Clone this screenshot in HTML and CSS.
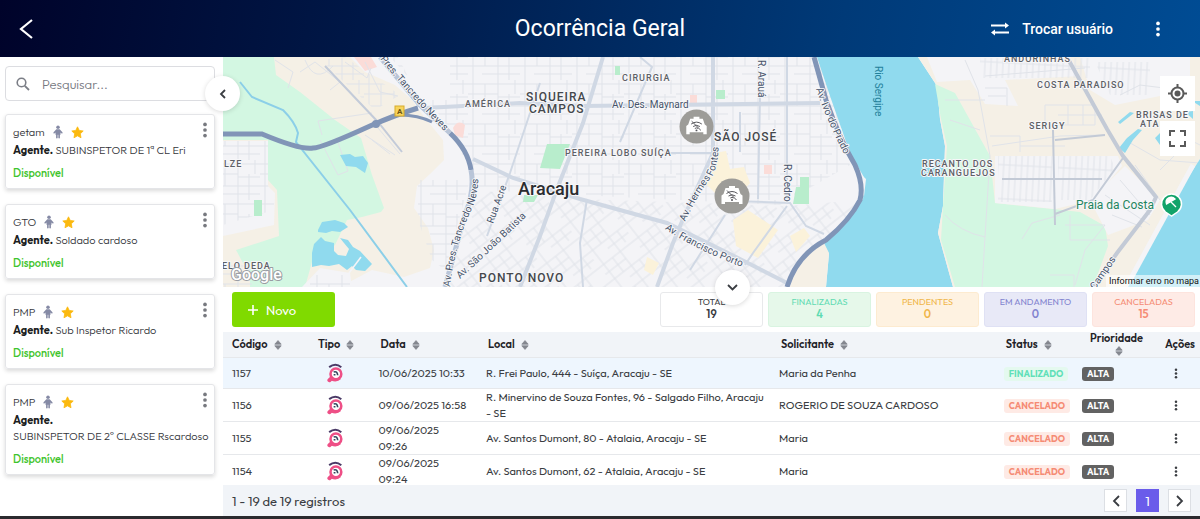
FILE: index.html
```html
<!DOCTYPE html>
<html lang="pt-BR">
<head>
  <meta charset="UTF-8" />
  <meta name="viewport" content="width=device-width, initial-scale=1.0"/>
  <title>Ocorrência Geral</title>
  <link rel="stylesheet" href="styles.css">
</head>
<body>
  <!-- Ícones -->
  <svg class="sprite" aria-hidden="true">
    <symbol id="i-person" viewBox="0 0 12 16">
      <circle cx="6" cy="2.200" r="2.100"/>
      <path d="M4 4.800h4l3.300 3.400c.7 1-.5 2-1.300 1.300L9 8.600v2.800H8.300v3.400c0 1.300-1.900 1.300-1.900 0v-3.400h-.8v3.400c0 1.300-1.900 1.300-1.900 0v-3.400H3V8.600l-1 .9C1.200 10.200 0 9.200.7 8.200z"/>
    </symbol>
    <symbol id="i-star" viewBox="0 0 24 24">
      <path d="M12 1.500l3.200 6.700 7.300 1-5.300 5.200 1.300 7.300L12 18.200l-6.500 3.500 1.300-7.300L1.500 9.200l7.300-1z" stroke="currentColor" stroke-width="1.500" stroke-linejoin="round"/>
    </symbol>
    <symbol id="i-dots" viewBox="0 0 6 20">
      <circle cx="3" cy="3" r="2.300"/><circle cx="3" cy="10" r="2.300"/><circle cx="3" cy="17" r="2.300"/>
    </symbol>
    <symbol id="i-sort" viewBox="0 0 10 12">
      <path d="M5 0.500L9 5H1zM5 11.500L1 7h8z" stroke="currentColor" stroke-linejoin="round"/>
    </symbol>
    <symbol id="i-type" viewBox="0 0 20 22">
      <path d="M3.500 4.500Q10.500-1 17 4.500" fill="none" stroke="#4a3a66" stroke-width="2.200"/>
      <circle cx="11" cy="12" r="6" fill="#fff" stroke="#ee4f86" stroke-width="2.800"/>
      <path d="M8.500 10q4-1.500 4.500 3.500M8.500 13h2" fill="none" stroke="#33475e" stroke-width="1.800"/>
      <path d="M5.500 17.500L3.800 19" fill="none" stroke="#ee4f86" stroke-width="4.500" stroke-linecap="round"/>
      <path d="M6 18.500q6 2.500 10-1.500" fill="none" stroke="#ee4f86" stroke-width="2"/>
    </symbol>
    <symbol id="i-car" viewBox="0 0 36 36">
      <circle cx="18" cy="18" r="17.500" fill="#9d9c98"/>
      <path d="M15 8h6v2h3.500l2 6 2 1.500V26h-3.500v-2H11v2H7.500v-8.500l2-1.500 2-6H15z" fill="#fff"/>
      <path d="M12.500 15.500q5.500-4 11 0M14.500 18q3.500-2.500 7 0M16.300 20q1.700-1.200 3.400 0M13 12.500l9.500 9.500" fill="none" stroke="#55555a" stroke-width="1"/>
      <circle cx="18" cy="22" r="1" fill="#55555a"/>
    </symbol>
  </svg>

  <header class="topbar">
    <button class="icon-btn back" aria-label="Voltar">
      <svg width="16" height="22" viewBox="0 0 16 22"><path d="M14 2L3 11l11 9" fill="none" stroke="currentColor" stroke-width="2.200"/></svg>
    </button>
    <h1>Ocorrência Geral</h1>
    <div class="topbar-right">
      <button class="switch-user">
        <svg width="18" height="14" viewBox="0 0 18 14"><path d="M0 3.500h14M4 10.500h14" stroke="currentColor" stroke-width="1.800"/><path d="M14 0.500L18 3.500 14 6.500zM4 7.500L0 10.500 4 13.500z" fill="currentColor"/></svg>
        Trocar usuário
      </button>
      <button class="icon-btn" aria-label="Mais opções">
        <svg width="6" height="16"><use href="#i-dots"/></svg>
      </button>
    </div>
  </header>

  <div class="layout">
    <aside class="sidebar">
      <label class="search">
        <svg width="14" height="14" viewBox="0 0 14 14"><circle cx="5.500" cy="5.500" r="4.300" fill="none" stroke="currentColor" stroke-width="1.600"/><path d="M8.800 8.800L13 13" stroke="currentColor" stroke-width="1.800"/></svg>
        <input type="text" placeholder="Pesquisar..." aria-label="Pesquisar">
      </label>

      <article class="agent">
        <div class="agent-head">
          <span>getam</span>
          <svg class="person"><use href="#i-person"/></svg>
          <svg class="star"><use href="#i-star"/></svg>
          <button class="icon-btn menu" aria-label="Opções"><svg width="6" height="16"><use href="#i-dots"/></svg></button>
        </div>
        <p><b>Agente.</b> SUBINSPETOR DE 1ª CL Eri</p>
        <p class="available">Disponível</p>
      </article>

      <article class="agent">
        <div class="agent-head">
          <span>GTO</span>
          <svg class="person"><use href="#i-person"/></svg>
          <svg class="star"><use href="#i-star"/></svg>
          <button class="icon-btn menu" aria-label="Opções"><svg width="6" height="16"><use href="#i-dots"/></svg></button>
        </div>
        <p><b>Agente.</b> Soldado cardoso</p>
        <p class="available">Disponível</p>
      </article>

      <article class="agent">
        <div class="agent-head">
          <span>PMP</span>
          <svg class="person"><use href="#i-person"/></svg>
          <svg class="star"><use href="#i-star"/></svg>
          <button class="icon-btn menu" aria-label="Opções"><svg width="6" height="16"><use href="#i-dots"/></svg></button>
        </div>
        <p><b>Agente.</b> Sub Inspetor Ricardo</p>
        <p class="available">Disponível</p>
      </article>

      <article class="agent">
        <div class="agent-head">
          <span>PMP</span>
          <svg class="person"><use href="#i-person"/></svg>
          <svg class="star"><use href="#i-star"/></svg>
          <button class="icon-btn menu" aria-label="Opções"><svg width="6" height="16"><use href="#i-dots"/></svg></button>
        </div>
        <p><b>Agente.</b><br>SUBINSPETOR DE 2º CLASSE Rscardoso</p>
        <p class="available">Disponível</p>
      </article>

      <button class="round-btn collapse-side" aria-label="Recolher lista">
        <svg width="7" height="10" viewBox="0 0 7 10"><path d="M6 1L2 5l4 4" fill="none" stroke="currentColor" stroke-width="1.800"/></svg>
      </button>
    </aside>

    <main class="content">
      <section class="map" aria-label="Mapa">
        <svg class="map-canvas" viewBox="223 57 977 230" preserveAspectRatio="xMidYMid slice">
          <defs>
            <pattern id="grid" width="52" height="40" patternUnits="userSpaceOnUse">
              <path d="M0 4h52M0 14h30M30 17h22M0 26h52M14 34h38M5 0v40M17 4v22M30 0v40M41 14v26M47 0v14" class="street"/>
            </pattern>
            <pattern id="grid-tilt" width="44" height="36" patternUnits="userSpaceOnUse" patternTransform="rotate(-38)">
              <path d="M0 4h44M0 13h26M0 22h44M18 30h26M5 0v36M16 4v18M26 0v36M36 22v14" class="street"/>
            </pattern>
            <pattern id="grid-east" width="12" height="34" patternUnits="userSpaceOnUse" patternTransform="rotate(3)">
              <path d="M3 0v34M9 0v34M0 10h12" class="street"/>
            </pattern>
            <path id="p-tancredo-n" d="M380 59Q412 99 456 143"/>
            <path id="p-tancredo-s" d="M450 287Q456 240 472 209 480 190 478 165"/>
            <path id="p-joao" d="M460 279Q495 247 532 211"/>
            <path id="p-acre" d="M493 224L510 177"/>
            <path id="p-hermes" d="M685 222Q700 190 711 178 718 168 719 142"/>
            <path id="p-porto" d="M665 229Q695 250 755 272"/>
            <path id="p-ivo" d="M816 89Q830 130 852 168"/>
            <path id="p-campos" d="M1095 290L1121 252"/>
          </defs>

          <!-- Terreno -->
          <rect x="223" y="57" width="977" height="230" fill="#f4f4f7"/>
          <path fill="url(#grid)" d="M470 57H822L850 165 780 205 480 190 450 130 425 95 390 57z"/>
          <path fill="url(#grid-tilt)" d="M470 190L580 199 787 206 860 200 787 287H446z"/>
          <path fill="#f5f0e6" d="M273 57H350L365 72 395 85 412 100 425 118 443 140 444 160 430 174 417 186 414 208 428 228 434 250 430 268 404 277 372 270 340 287H223V192L272 190 278 235 235 250 223 255V57z"/>
          <path fill="#d3f7e2" d="M223 57H274L276 75 300 92 335 120 361 138 372 175 384 208 381 212 362 217 347 220 335 245 312 262 305 287H250L250 276 236 250 279 236 277 190 268 180V140H223z"/>
          <path fill="#f4f4f7" d="M223 141H268V186L275 193 274 225 223 236z"/>
          <path fill="url(#grid)" d="M223 141H268V186L274 193 274 210 223 225zM223 262H252V287H223z"/>
          <path fill="#f4f4f7" d="M302 287L320 268 350 273 352 287zM398 57H450V100L420 100z"/>
          <path fill="url(#grid)" d="M310 275H350V287H310zM418 180H470L445 270 432 260 418 220zM320 60L345 57 400 95 375 110z"/>
          <path fill="#fbdcd8" d="M354 57h17l6 10-12 4zM453 128q5-9 12-3l-2 13-8-3zM690 95h7v8h-7zM764 165h8v9h-8z"/>
          <path fill="#b8edcc" d="M254 200h8v16h-8zM547 144h23l-10 25-20-1zM800 177h9v27h-16l3-17h4zM524 195h14l-4 7h-11zM615 66h5v9h-5zM716 90h9v9h-9z"/>
          <path fill="#fbf2da" d="M714 153l12-2 4 18 14-2 6 16-14 16-20-5-10-10zM733 220l15-10 30 20-20 28-22-12zM790 236l14-8 6 8-14 16zM647 257l12 6-6 12-9-5z"/>
          <path d="M275 60L293 72 288 88M300 72l15-10 25 20-10 8M305 60q10 25 28 6M345 62l22 16 4-10M365 62l15 30 18 4M322 135L318 121 372 113M320 140l18 35 10-4-12-34M365 135L395 155M378 128l22 26M372 140l18 14" class="street"/>

          <!-- Água -->
          <g fill="#90daee">
            <path d="M817 57L830 96 850 153 865 179 863 199 840 229 824 244 829 254 826 287H953L938 233 943 206 945 146 940 119 937 86 918 57z"/>
            <path d="M340 155l10-1 5 3 8-1 5 7-3 10-9-6-10-1zM318 230l4-8 13-2 9 3 4 4-8 5-8-1-6 2-8-1zM312 253l2-9 7-7 4 4 9 2v8l4 4 8 1 3-7-5-6-4-5 8 2 5 7 7 4 12 13-7 7-9-1-4-4-5 4-8-6-10 2-8-1-9 2z"/>
          </g>
          <path d="M240 82L252 97 283 110Q295 122 298 133L296 142 350 210 407 287" fill="none" stroke="#8ccfe8" stroke-width="2"/>
          <path d="M349 273l12-16" stroke="#f4f4f7" stroke-width="1.500"/>
          <path fill="#f5f0e6" d="M824 243L829 253 826 287H790Q796 262 824 243z"/>
          <path fill="#f4f4f7" d="M856 170l10 9-2 17-6-6z"/>

          <!-- Margem leste -->
          <path fill="#f5f0e6" d="M918 57H1200V159L1170 206 1147 249 1127 287H953L938 233 943 206 945 146 940 119 937 86z"/>
          <path fill="#d3f7e2" d="M935 84L955 93 990 156 995 203 1053 209 1080 212 1105 226 1108 246 1093 287H955L941 240 943 206 947 146 941 119z"/>
          <path fill="#f4f4f7" d="M927 57H1070L1080 76 1005 80 1018 106 985 104 970 80 937 82zM995 156H1118L1122 166 1093 200 1055 209 995 203zM1080 57H1190V90L1115 105 1090 90zM1090 200L1125 166 1160 200 1148 220 1108 235z"/>
          <path fill="url(#grid-east)" d="M998 156H1052V202H998zM1058 156H1110L1115 168 1090 200 1058 200zM980 58H1090V78H980zM1095 62H1150V95H1110z"/>
          <path d="M985 76L1085 68M965 60L978 90 990 156M985 88h22v18M988 96h18M990 136h30v16M992 146L1060 136 1105 135M1045 105h50v20h-50zM1058 115h44M1068 105v20M1083 105v20M1020 146h45M945 100h40M950 120l30 10M945 215Q960 232 985 237L990 156M985 237L982 287M1060 215l-28 8-10 16M1065 225h40l-20 25M1070 215v25h40M1120 180l30 35M1135 165l25 35M1105 195l45 30M1112 215l30 12M1050 275h24v12M1075 285l10-35M1160 170l30-30 10 5M1125 140l35 20 40 3M1120 95l20-10 40 5" class="street"/>
          <path fill="#90daee" d="M1200 159L1170 206 1147 249 1128 287H1200zM1118 122l12-10 4 1-14 11zM1119 148l8-10 11-9 4 1-9 10-8 13zM1155 138l5-5v12zM1185 112l8-1v8zM1192 101h8v5z"/>
          <path d="M1193 165L1130 280" stroke="#f4f4f7" stroke-width="5"/>
          <g fill="none" stroke="#c3cad6">
            <path d="M1067 57L1107 129 1123 156 1156 197 1150 210 1117 253 1093 287" stroke-width="4"/>
            <path d="M1053 130L1055 225M1002 179h100M1123 158L1093 200 1055 214M1055 140L1105 135" stroke-width="2"/>
          </g>

          <!-- Avenidas -->
          <g fill="none" stroke="#d0d8e4" stroke-width="4">
            <path d="M425 108L520 103 583 106 820 103M603 57L583 123 557 189 540 236 520 287M713 57V153L683 219 673 243 657 287M473 159L513 178 580 199 667 223 740 259 787 283"/>
            <path d="M787 57V200M760 96L758 199M733 201L790 203 806 226 824 234M667 153h46M587 199L580 243 583 287M787 206L753 253 745 265M540 83L510 173 487 236M725 215L690 270M740 152v-40M640 57l12 10-32 75" stroke-width="2"/>
            <path d="M325 66L378 122 402 152" stroke="#c3cbd9" stroke-width="2"/>
          </g>
          <g fill="none" stroke="#8195b7" stroke-width="5">
            <path d="M223 134H262Q300 150 313 148 322 148 370 126 395 115 418 108"/>
            <path d="M400 115Q418 115 432 122" stroke-width="3"/>
            <path d="M450 133Q468 150 471 170"/>
            <path d="M380 57L420 105 450 133M471 170Q475 190 465 215L445 287" stroke="#b9c5d8"/>
            <path d="M814 57L826 100Q840 140 855 165 864 185 860 200 850 220 826 240 797 255 787 287"/>
          </g>
          <circle cx="376" cy="124" r="4" fill="#8195b7"/>
          <rect x="395" y="106" width="9" height="10" fill="#f7d45c" stroke="#d8ab2a"/>
          <text x="397" y="114" class="badge-a">A</text>

          <!-- Nomes -->
          <g class="area">
            <text x="622" y="81">CIRURGIA</text>
            <text x="465" y="107">AMÉRICA</text>
            <text x="565" y="156">PEREIRA LOBO SUÍÇA</text>
            <text x="224" y="167">LZE</text>
            <text x="222" y="269">ELO DEDA</text>
            <text x="1004" y="62">ANDORINHAS</text>
            <text x="1037" y="88">COSTA PARADISO</text>
            <text x="1029" y="129">SERIGY</text>
            <text x="1136" y="118">BRISAS DE</text>
            <text x="1140" y="127">ATA</text>
            <text x="922" y="167">RECANTO DOS</text>
            <text x="921" y="176">CARANGUEJOS</text>
          </g>
          <g class="district">
            <text x="526" y="101">SIQUEIRA</text>
            <text x="529" y="113">CAMPOS</text>
            <text x="714" y="141">SÃO JOSÉ</text>
            <text x="479" y="282">PONTO NOVO</text>
          </g>
          <text x="518" y="195" class="city">Aracaju</text>
          <g class="road">
            <text x="612" y="108">Av. Des. Maynard</text>
            <text><textPath href="#p-tancredo-n">Pres. Tancredo Neves</textPath></text>
            <text><textPath href="#p-tancredo-s">Av. Pres. Tancredo Neves</textPath></text>
            <text><textPath href="#p-joao">Av. São João Batista</textPath></text>
            <text><textPath href="#p-acre">Rua Acre</textPath></text>
            <text><textPath href="#p-hermes">Av. Hermes Fontes</textPath></text>
            <text><textPath href="#p-porto">Av. Francisco Porto</textPath></text>
            <text><textPath href="#p-ivo">Av. Ivo do Prado</textPath></text>
            <text><textPath href="#p-campos">Campos</textPath></text>
            <text transform="translate(758 60) rotate(90)">R. Arauá</text>
            <text transform="translate(784 164) rotate(90)">R. Cedro</text>
          </g>
          <text transform="translate(875 66) rotate(90)" class="river">Rio Sergipe</text>
          <text x="1076" y="209" class="beach">Praia da Costa</text>
          <path d="M1171.500 216l-6-4a10 10 0 1 1 12 0z" fill="#11a36a" stroke="#fff" stroke-width="1.500"/>
          <path d="M1166.500 204a5 5 0 0 1 8.500-5zM1171 202l5 5" fill="#fff" stroke="#fff" stroke-width="1.300"/>
          <text x="231" y="280" class="logo">Google</text>

          <!-- Viaturas -->
          <use href="#i-car" x="679" y="109" width="35" height="35"/>
          <use href="#i-car" x="714" y="178" width="36" height="36"/>
        </svg>

        <div class="map-tools">
          <button aria-label="Minha localização">
            <svg width="19" height="19" viewBox="0 0 19 19"><path d="M9.500 0v4M9.500 15v4M0 9.500h4M15 9.500h4" stroke="currentColor" stroke-width="2"/><circle cx="9.500" cy="9.500" r="6" fill="none" stroke="currentColor" stroke-width="2"/><circle cx="9.500" cy="9.500" r="3" fill="currentColor"/></svg>
          </button>
          <button aria-label="Tela cheia">
            <svg width="17" height="17" viewBox="0 0 17 17"><path d="M1 6V1h5M11 1h5v5M16 11v5h-5M6 16H1v-5" fill="none" stroke="currentColor" stroke-width="2"/></svg>
          </button>
        </div>
        <a href="#" class="map-report">Informar erro no mapa</a>
        <button class="round-btn collapse-map" aria-label="Recolher mapa">
          <svg width="11" height="7" viewBox="0 0 11 7"><path d="M1 1l4.500 4.500L10 1" fill="none" stroke="currentColor" stroke-width="1.800"/></svg>
        </button>
      </section>

      <section class="toolbar">
        <button class="btn-new">
          <svg width="10" height="10" viewBox="0 0 10 10"><path d="M5 0v10M0 5h10" stroke="currentColor" stroke-width="1.600"/></svg>
          Novo
        </button>
        <div class="totals">
          <div class="total">TOTAL<b>19</b></div>
          <div class="total total-done">FINALIZADAS<b>4</b></div>
          <div class="total total-pending">PENDENTES<b>0</b></div>
          <div class="total total-progress">EM ANDAMENTO<b>0</b></div>
          <div class="total total-canceled">CANCELADAS<b>15</b></div>
        </div>
      </section>

      <section class="table-wrap">
        <table>
          <colgroup>
            <col class="c-code"><col class="c-type"><col class="c-date"><col class="c-place">
            <col class="c-person"><col class="c-status"><col class="c-priority"><col class="c-actions">
          </colgroup>
          <thead>
            <tr>
              <th class="code-cell">Código <svg class="sort"><use href="#i-sort"/></svg></th>
              <th class="type-cell">Tipo <svg class="sort"><use href="#i-sort"/></svg></th>
              <th>Data <svg class="sort"><use href="#i-sort"/></svg></th>
              <th>Local <svg class="sort"><use href="#i-sort"/></svg></th>
              <th>Solicitante <svg class="sort"><use href="#i-sort"/></svg></th>
              <th>Status <svg class="sort"><use href="#i-sort"/></svg></th>
              <th class="priority-cell">Prioridade<br><svg class="sort"><use href="#i-sort"/></svg></th>
              <th class="right">Ações</th>
            </tr>
          </thead>
          <tbody>
            <tr class="selected">
              <td>1157</td>
              <td class="type-cell"><svg class="type"><use href="#i-type"/></svg></td>
              <td>10/06/2025 10:33</td>
              <td>R. Frei Paulo, 444 - Suíça, Aracaju - SE</td>
              <td>Maria da Penha</td>
              <td><span class="tag tag-done">FINALIZADO</span></td>
              <td><span class="tag tag-high">ALTA</span></td>
              <td class="center"><button class="icon-btn" aria-label="Ações"><svg width="4" height="11"><use href="#i-dots"/></svg></button></td>
            </tr>
            <tr>
              <td>1156</td>
              <td class="type-cell"><svg class="type"><use href="#i-type"/></svg></td>
              <td>09/06/2025 16:58</td>
              <td>R. Minervino de Souza Fontes, 96 - Salgado Filho, Aracaju<br>- SE</td>
              <td>ROGERIO DE SOUZA CARDOSO</td>
              <td><span class="tag tag-canceled">CANCELADO</span></td>
              <td><span class="tag tag-high">ALTA</span></td>
              <td class="center"><button class="icon-btn" aria-label="Ações"><svg width="4" height="11"><use href="#i-dots"/></svg></button></td>
            </tr>
            <tr>
              <td>1155</td>
              <td class="type-cell"><svg class="type"><use href="#i-type"/></svg></td>
              <td>09/06/2025<br>09:26</td>
              <td>Av. Santos Dumont, 80 - Atalaia, Aracaju - SE</td>
              <td>Maria</td>
              <td><span class="tag tag-canceled">CANCELADO</span></td>
              <td><span class="tag tag-high">ALTA</span></td>
              <td class="center"><button class="icon-btn" aria-label="Ações"><svg width="4" height="11"><use href="#i-dots"/></svg></button></td>
            </tr>
            <tr>
              <td>1154</td>
              <td class="type-cell"><svg class="type"><use href="#i-type"/></svg></td>
              <td>09/06/2025<br>09:24</td>
              <td>Av. Santos Dumont, 62 - Atalaia, Aracaju - SE</td>
              <td>Maria</td>
              <td><span class="tag tag-canceled">CANCELADO</span></td>
              <td><span class="tag tag-high">ALTA</span></td>
              <td class="center"><button class="icon-btn" aria-label="Ações"><svg width="4" height="11"><use href="#i-dots"/></svg></button></td>
            </tr>
          </tbody>
        </table>
      </section>

      <footer class="pager">
        <span>1 - 19 de 19 registros</span>
        <nav class="pages" aria-label="Paginação">
          <button aria-label="Anterior"><svg width="8" height="12" viewBox="0 0 8 12"><path d="M7 1L2 6l5 5" fill="none" stroke="currentColor" stroke-width="1.800"/></svg></button>
          <button class="active">1</button>
          <button aria-label="Próxima"><svg width="8" height="12" viewBox="0 0 8 12"><path d="M1 1l5 5-5 5" fill="none" stroke="currentColor" stroke-width="1.800"/></svg></button>
        </nav>
      </footer>
    </main>
  </div>
</body>
</html>
```
FILE: styles.css
```css
* {
  box-sizing: border-box;
}
body {
  margin: 0;
  height: 100vh;
  display: flex;
  flex-direction: column;
  font-family: 'Outfit', 'Lato', sans-serif;
  font-size: 11px;
  line-height: 16px;
  color: #3a3d42;
  background: white;
  border-bottom: 3px solid #2b2a2e;
}
button {
  font: inherit;
  color: inherit;
  border: 0;
  padding: 0;
  background: none;
  cursor: pointer;
}
svg {
  display: block;
  fill: currentColor;
}
p {
  margin: 0;
}
.sprite {
  position: absolute;
  width: 0;
  height: 0;
}
.icon-btn {
  display: inline-flex;
  align-items: center;
  justify-content: center;
  vertical-align: middle;
}

/* Barra superior */
.topbar {
  display: grid;
  grid-template-columns: 1fr auto 1fr;
  align-items: center;
  flex: none;
  height: 57px;
  padding: 0 32px 0 18px;
  color: white;
  background: linear-gradient(100deg, #00032a 0%, #001a4a 33%, #003a78 70%, #004c94 100%);
  font-family: 'Roboto', sans-serif;
}
.topbar h1 {
  margin: 0;
  padding-left: 14px;
  font-size: 23px;
  line-height: 32px;
  font-weight: 400;
}
.back {
  justify-self: start;
}
.topbar-right {
  display: flex;
  justify-content: flex-end;
  align-items: center;
  gap: 42px;
}
.topbar-right .icon-btn {
  padding-right: 7px;
}
.switch-user {
  display: flex;
  align-items: center;
  gap: 13px;
  font-size: 14px;
  font-weight: 500;
}

.layout {
  display: flex;
  flex: 1;
  min-height: 0;
}

/* Lista de agentes */
.sidebar {
  position: relative;
  z-index: 2;
  flex: none;
  width: 223px;
  padding: 9px 8px 0 5px;
}
.search {
  display: flex;
  align-items: center;
  gap: 10px;
  height: 35px;
  margin-bottom: 13px;
  padding: 0 10px;
  border: 1px solid #dcdde1;
  border-radius: 4px;
  color: #7b7e86;
}
.search svg {
  flex: none;
}
.search input {
  min-width: 0;
  flex: 1;
  border: 0;
  outline: 0;
  font: inherit;
  font-size: 13px;
  font-weight: 300;
}
.search input::placeholder {
  color: #75787f;
}
.agent {
  margin-bottom: 15px;
  padding: 9px 0 7px 7px;
  border: 1px solid #e4e5e8;
  border-radius: 3px;
  box-shadow: 0 2px 4px rgba(0,0,0,0.15);
  color: #33353a;
  font-weight: 300;
}
.agent-head {
  display: flex;
  align-items: center;
  height: 16px;
  margin-bottom: 2px;
}
.agent b {
  color: #1c1e22;
  font-weight: 700;
}
.person {
  width: 10px;
  height: 14px;
  margin: 0 8px;
  color: #858aa5;
}
.star {
  width: 13px;
  height: 13px;
  color: #fbb90f;
}
.menu {
  margin: 0 6px 4px auto;
  color: #77797f;
}
.available {
  margin-top: 7px;
  color: #3fc42c;
  font-weight: 500;
}
.round-btn {
  position: absolute;
  display: flex;
  align-items: center;
  justify-content: center;
  width: 35px;
  height: 35px;
  border-radius: 50%;
  background: white;
  box-shadow: 0 1px 5px rgba(0,0,0,0.15);
}
.collapse-side {
  top: 19px;
  right: -17px;
}

/* Mapa */
.content {
  display: flex;
  flex-direction: column;
  flex: 1;
  min-width: 0;
}
.map {
  position: relative;
  flex: none;
  height: 230px;
}
.map-canvas {
  width: 100%;
  height: 100%;
  font-family: 'Roboto', sans-serif;
}
.street {
  fill: none;
  stroke: #e0e3e9;
  stroke-width: 1;
}
.map-canvas text {
  paint-order: stroke;
  stroke: #f7f7f9;
  stroke-width: 2px;
  stroke-linejoin: round;
}
.area {
  font-size: 9px;
  font-weight: 500;
  letter-spacing: 1px;
  fill: #5d6066;
}
.district {
  font-size: 12px;
  font-weight: 500;
  letter-spacing: 1px;
  fill: #44474c;
}
.city {
  font-size: 18px;
  font-weight: 500;
  fill: #2b2d30;
}
.road {
  font-size: 10px;
  fill: #46536a;
}
.map-canvas .river {
  font-size: 10px;
  fill: #23809a;
  stroke: none;
}
.beach {
  font-size: 12px;
  fill: #1f8560;
}
.map-canvas .badge-a {
  font-size: 8px;
  font-weight: 700;
  fill: #6d5412;
  stroke: none;
}
.map-canvas .logo {
  font-size: 16px;
  font-weight: 500;
  fill: white;
  stroke: #9a9da3;
}
.map-tools {
  position: absolute;
  top: 19px;
  right: 5px;
  display: grid;
  gap: 10px;
}
.map-tools button {
  display: flex;
  align-items: center;
  justify-content: center;
  width: 35px;
  height: 35px;
  background: white;
  color: #5a5a5a;
}
.map-report {
  position: absolute;
  right: 0;
  bottom: 0;
  padding: 0 1px 0 3px;
  background: rgba(255,255,255,0.6);
  font-family: 'Roboto', sans-serif;
  font-size: 9px;
  line-height: 12px;
  color: #111;
  text-decoration: none;
}
.collapse-map {
  bottom: -18px;
  left: 50%;
  margin-left: 3px;
}

/* Botão novo e totais */
.toolbar {
  display: flex;
  justify-content: space-between;
  flex: none;
  padding: 5px 5px 5px 9px;
}
.btn-new {
  display: flex;
  align-items: center;
  gap: 8px;
  width: 103px;
  height: 35px;
  padding: 0 16px;
  border-radius: 3px;
  background: #80da00;
  color: white;
  font-size: 13px;
}
.totals {
  display: flex;
  gap: 5px;
}
.total {
  display: flex;
  flex-direction: column;
  width: 103px;
  height: 35px;
  padding: 2px 0;
  border: 1px solid #e8e9eb;
  border-radius: 3px;
  text-align: center;
  font-size: 9px;
  line-height: 13px;
}
.total b {
  font-size: 11px;
  font-weight: 600;
}
.total-done {
  background: #e6f8ea;
  border-color: #d9f4e1;
  color: #60dbb2;
}
.total-pending {
  background: #fef2e1;
  border-color: #fdebd0;
  color: #f0b649;
}
.total-progress {
  background: #e8e9f7;
  border-color: #dfe1f4;
  color: #8384cf;
}
.total-canceled {
  background: #feebe6;
  border-color: #fde4de;
  color: #f58b74;
}

/* Tabela */
.table-wrap {
  flex: 1;
  min-height: 0;
  overflow: hidden;
}
table {
  width: 100%;
  table-layout: fixed;
  border-collapse: collapse;
}
.c-code { width: 9%; }
.c-type { width: 6%; }
.c-date { width: 11%; }
.c-place { width: 30%; }
.c-person { width: 23%; }
.c-status { width: 8%; }
.c-priority { width: 8%; }
.c-actions { width: 5%; }
th,
td {
  padding: 0 0 0 9px;
  text-align: left;
  border-bottom: 1px solid #e6e8eb;
}
th {
  height: 25px;
  padding-left: 11px;
  background: #f1f4f8;
  color: #1f2227;
  font-weight: 600;
  line-height: 12px;
}
td {
  height: 33px;
}
.selected td {
  height: 31px;
  background: #eef6fe;
}
.code-cell {
  padding-left: 9px;
}
.type-cell {
  padding-left: 7px;
}
.priority-cell {
  padding-left: 9px;
  text-align: center;
}
.center {
  padding: 0;
  text-align: center;
}
.right {
  padding: 0 5px 0 0;
  text-align: right;
}
.sort {
  display: inline-block;
  vertical-align: middle;
  width: 8px;
  height: 10px;
  margin-left: 4px;
  color: #84878f;
}
.type {
  width: 18px;
  height: 20px;
  margin-left: 8px;
}
.tag {
  display: inline-block;
  padding: 0 5px;
  border-radius: 3px;
  font-size: 9px;
  line-height: 14px;
  font-weight: 700;
}
.tag-done {
  background: #e4f9ef;
  color: #5fe0b8;
}
.tag-canceled {
  background: #feeae5;
  color: #f58b74;
}
.tag-high {
  background: #626262;
  color: white;
}

/* Rodapé */
.pager {
  display: flex;
  align-items: center;
  justify-content: space-between;
  flex: none;
  height: 31px;
  padding: 0 9px;
  background: #f1f4f8;
  font-size: 13px;
}
.pages {
  display: flex;
  gap: 9px;
}
.pages button {
  display: flex;
  align-items: center;
  justify-content: center;
  width: 23px;
  height: 23px;
  border: 1px solid #dcdfe4;
  background: white;
}
.pages .active {
  border-color: #6a5cea;
  background: #6a5cea;
  color: white;
}
```
